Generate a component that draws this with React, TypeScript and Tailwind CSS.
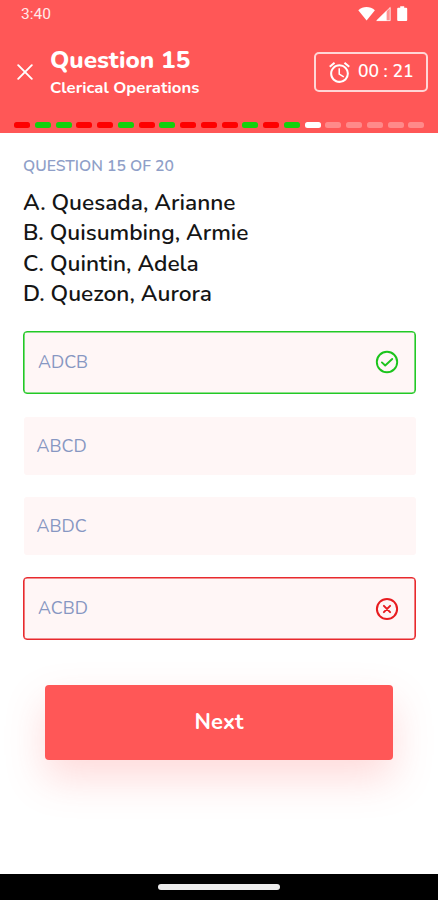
import React, { useState } from 'react';
import { MdAlarm } from 'react-icons/md';

type Step = 'right' | 'wrong' | 'current' | 'todo';

const STEPS: Step[] = [
  'wrong', 'right', 'right', 'wrong', 'wrong', 'right', 'wrong', 'right', 'wrong', 'wrong',
  'wrong', 'right', 'wrong', 'right', 'current', 'todo', 'todo', 'todo', 'todo', 'todo',
];

const STEP_COLORS: Record<Step, string> = {
  right: 'bg-[#12d00c]',
  wrong: 'bg-[#fe0000]',
  current: 'bg-white',
  todo: 'bg-[#ff8a8a]',
};

const NAMES = ['A. Quesada, Arianne', 'B. Quisumbing, Armie', 'C. Quintin, Adela', 'D. Quezon, Aurora'];

const StatusBar: React.FC = () => (
  <div className="flex h-7 items-center justify-between pl-[21px] pr-[30px]">
    <span className="font-[Roboto,sans-serif] text-[15.5px] leading-7 text-[#ffe9e9]">3:40</span>
    <svg width="50" height="16" viewBox="0 0 50 16" fill="#fff">
      <path d="M0.3 4.2C5 -0.2 12 -0.2 16.9 4.2L8.6 14.6Z" />
      <path d="M32.4 1V14.8H18.4Z" fillOpacity=".35" />
      <path d="M28.6 4.8V14.8H18.4Z" />
      <path d="M32.2 1.5V14.6H18.8Z" fill="none" stroke="#fff" strokeOpacity=".8" strokeWidth=".9" />
      <path d="M42.2 .2h4v1.5h2a1 1 0 0 1 1 1v11.4a1 1 0 0 1-1 1h-8a1 1 0 0 1-1-1V2.7a1 1 0 0 1 1-1h2z" />
    </svg>
  </div>
);

const CheckIcon: React.FC = () => (
  <svg width="24" height="24" viewBox="0 0 24 24" fill="none" stroke="#1cc41c" strokeWidth="1.9" strokeLinecap="round" strokeLinejoin="round" className="-mt-px">
    <circle cx="12" cy="12" r="10.2" />
    <path d="M6.9 12.4 10.2 15.5 17.2 9" />
  </svg>
);

const CrossIcon: React.FC = () => (
  <svg width="24" height="24" viewBox="0 0 24 24" fill="none" stroke="#e81c20" strokeWidth="2" strokeLinecap="round">
    <circle cx="12" cy="12" r="10.1" />
    <path d="m8.9 8.9 6.2 6.2M15.1 8.9l-6.2 6.2" />
  </svg>
);

const App: React.FC = () => {
  const [open, setOpen] = useState(true);

  if (!open) return null;

  return (
    <div className="flex h-[900px] w-[438px] flex-col overflow-hidden bg-white font-['Nunito','Open_Sans',sans-serif]">
      <header className="h-[133px] shrink-0 bg-[#ff5757] text-white">
        <StatusBar />
        <div className="flex h-[88px] items-center pl-[17px] pr-[10px]">
          <button type="button" aria-label="Close" onClick={() => setOpen(false)}>
            <svg width="16" height="16" viewBox="0 0 16 16" stroke="#fff" strokeWidth="1.9" strokeLinecap="round">
              <path d="M1.2 1.2 14.8 14.8M14.8 1.2 1.2 14.8" />
            </svg>
          </button>
          <div className="ml-[17px] flex-1 whitespace-nowrap">
            <h1 className="text-[24.3px] font-extrabold leading-8">Question 15</h1>
            <p className="text-[16.7px] font-bold leading-6">Clerical Operations</p>
          </div>
          <div className="flex h-10 w-[114px] items-center rounded-[5px] border-2 border-[#ffd6d6] pl-[11px]">
            <MdAlarm size={25} className="shrink-0" />
            <span className="-mt-px ml-[6px] whitespace-nowrap text-[17.5px] font-semibold">00 : 21</span>
          </div>
        </div>
        <div className="flex justify-between pl-[14px] pr-[13.5px] pt-[6px]">
          {STEPS.map((step, i) => (
            <span key={i} className={`h-[5.5px] w-4 rounded-[2.5px] ${STEP_COLORS[step]}`} />
          ))}
        </div>
      </header>

      <main className="flex-1 pl-[23px] pr-[22px] pt-[21px]">
        <p className="text-[15.7px] font-semibold leading-6 text-[#8f9fc8]">QUESTION 15 OF 20</p>
        <div className="mt-[10px] text-[22.7px] font-semibold leading-[30.25px] text-[#151515]">
          {NAMES.map((name) => (
            <p key={name}>{name}</p>
          ))}
        </div>

        <div className="mt-[22px] text-[17.8px] text-[#8797c2]">
          <div className="flex h-[63px] items-center justify-between rounded-[4px] border border-[#22c925] bg-[#fff6f6] pl-[14px] pr-[16px] shadow-[inset_0_0_0_0.6px_#22c925]">
            <span>ADCB</span>
            <CheckIcon />
          </div>
          <div className="ml-px mt-[23px] flex h-[58px] items-center rounded-[3px] bg-[#fff6f6] pl-[12.5px]">
            <span>ABCD</span>
          </div>
          <div className="ml-px mt-[22px] flex h-[58px] items-center rounded-[3px] bg-[#fff6f6] pl-[12.5px]">
            <span>ABDC</span>
          </div>
          <div className="mt-[22px] flex h-[63px] items-center justify-between rounded-[4px] border border-[#e8292d] bg-[#fff6f6] pl-[14px] pr-[16px] shadow-[inset_0_0_0_0.6px_#e8292d]">
            <span>ACBD</span>
            <CrossIcon />
          </div>
        </div>

        <button
          type="button"
          className="ml-[22px] mt-[45px] block h-[75px] w-[348px] rounded-[4px] bg-[#ff5757] text-[22px] font-bold text-white shadow-[0_18px_40px_rgba(255,87,87,0.22)]"
        >
          Next
        </button>
      </main>

      <footer className="flex h-[26px] shrink-0 justify-center bg-black pt-[10px]">
        <span className="h-[6px] w-[122px] rounded-[3px] bg-[#ececec]" />
      </footer>
    </div>
  );
};

export default App;
